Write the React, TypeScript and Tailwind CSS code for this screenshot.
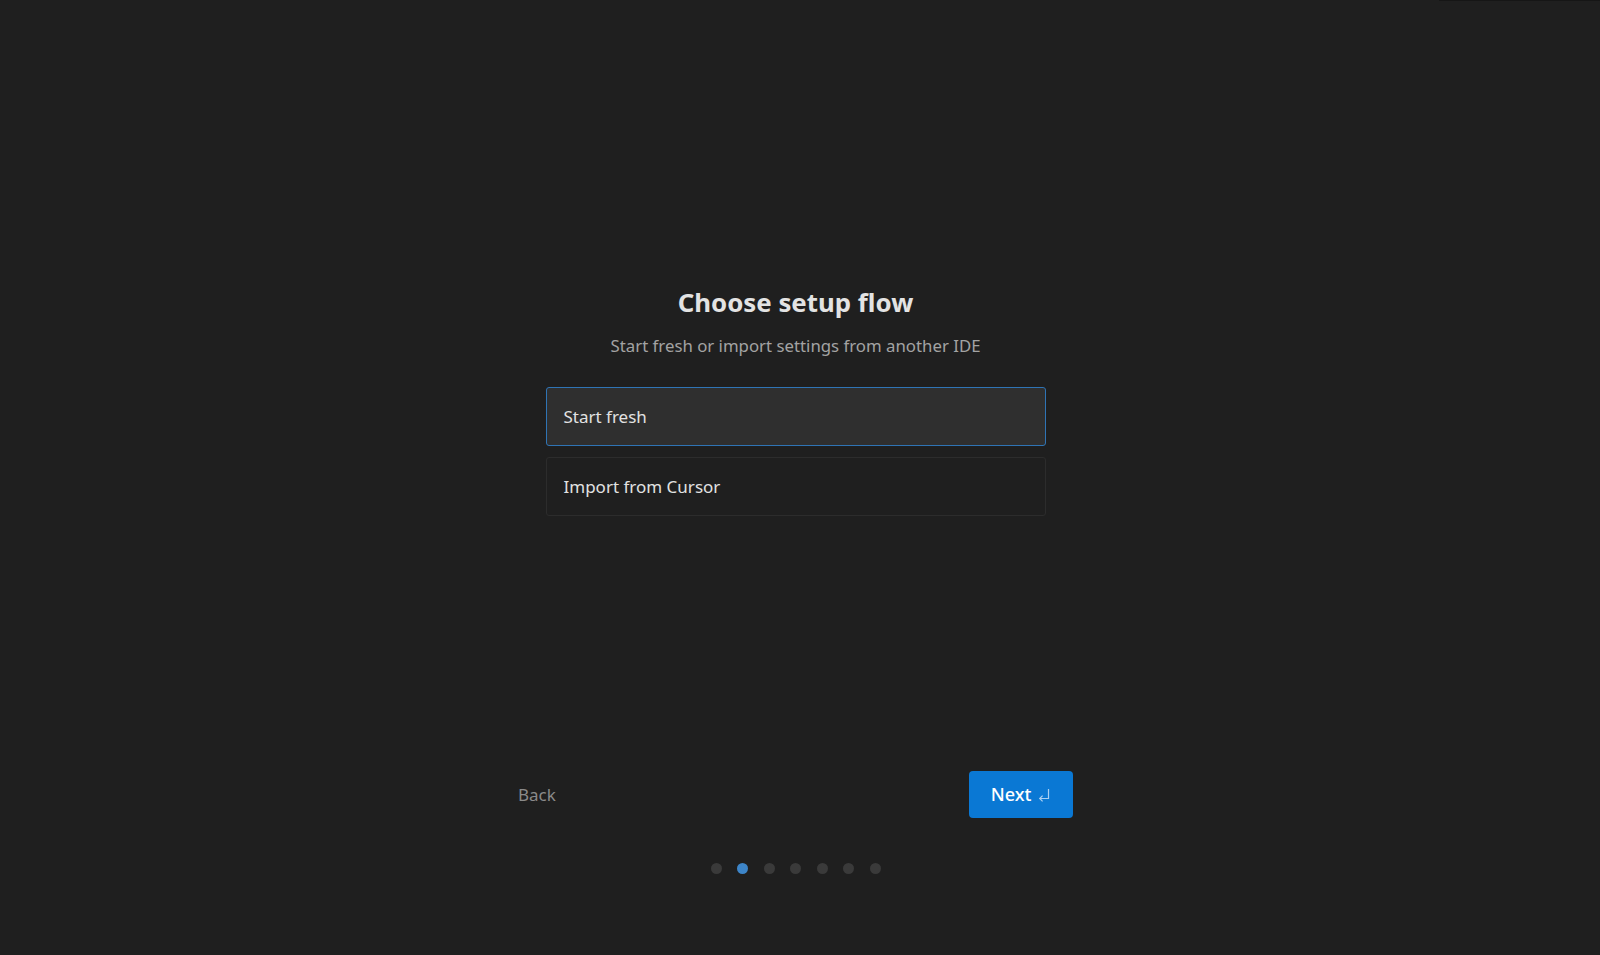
import React, { useState } from "react";

const steps = [0, 1, 2, 3, 4, 5, 6];

const options = ["Start fresh", "Import from Cursor"];

const ReturnGlyph: React.FC = () => (
  <svg width="14" height="15" viewBox="0 0 14 15" fill="none" className="ml-1.5 mt-px">
    <path d="M11.5 1V10.5H3" stroke="#a9cff2" strokeWidth="1.2" />
    <path d="M5.6 7.6L2.7 10.5L5.6 13.4" stroke="#a9cff2" strokeWidth="1.2" />
  </svg>
);

const App: React.FC = () => {
  const [selected, setSelected] = useState(0);

  return (
    <div
      className="relative min-h-[955px] w-full bg-[#1f1f1f] text-[#dedede]"
      style={{ fontFamily: '"Noto Sans", "Open Sans", sans-serif' }}
    >
      <div className="absolute right-0 top-0 h-px w-[161px] bg-[#161616]" />

      <div className="flex flex-col items-center pr-[9px] pt-[285px]">
        <h1 className="text-[25.8px] font-bold leading-[34px] text-[#e3e3e3]">Choose setup flow</h1>
        <p className="mt-[15px] text-[16.8px] leading-6 text-[#a3a3a3]">
          Start fresh or import settings from another IDE
        </p>

        <div className="mt-[29px] flex w-[500px] flex-col gap-[11px]">
          {options.map((label, i) => (
            <button
              key={label}
              onClick={() => setSelected(i)}
              className={
                i === selected
                  ? "flex h-[59px] items-center rounded-[3px] border border-[#2f74b5] bg-[#2f2f2f] px-[17px] text-left text-[17px] text-[#e2e2e2]"
                  : "flex h-[59px] items-center rounded-[3px] border border-[#2c2c2c] bg-[#1f1f1f] px-[17px] text-left text-[17px] text-[#e2e2e2]"
              }
            >
              {label}
            </button>
          ))}
        </div>

        <div className="mt-[255px] flex w-[555px] items-center justify-between">
          <button className="text-[17px] text-[#8a8a8a]">Back</button>
          <button className="flex h-[47px] w-[104px] items-center justify-center rounded-[4px] bg-[#0a78d4] text-[18px] font-medium text-white">
            Next
            <ReturnGlyph />
          </button>
        </div>

        <div className="mt-[45px] flex items-center gap-[15.5px]">
          {steps.map((s) => (
            <span
              key={s}
              className={
                s === 1
                  ? "h-[11px] w-[11px] rounded-full bg-[#3d85c8]"
                  : "h-[11px] w-[11px] rounded-full bg-[#3a3a3a]"
              }
            />
          ))}
        </div>
      </div>
    </div>
  );
};

export default App;
